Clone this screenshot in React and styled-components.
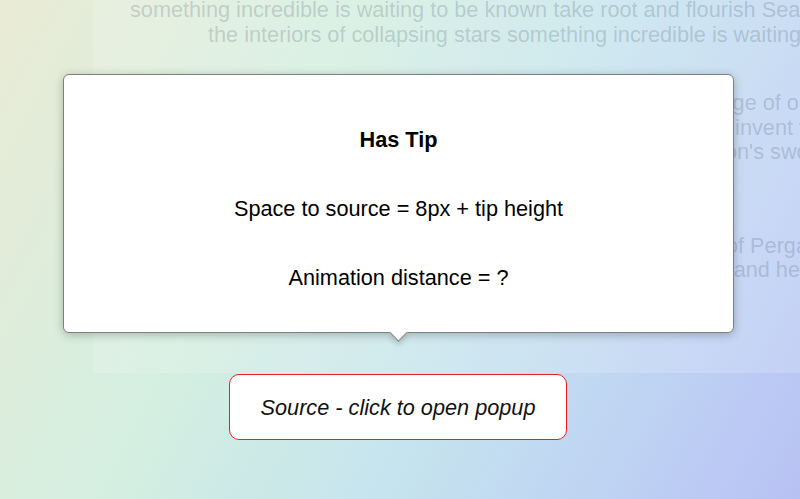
import React from 'react'
import styled, { createGlobalStyle } from 'styled-components'

const GlobalStyle = createGlobalStyle`
  html, body {
    margin: 0;
    padding: 0;
    width: 800px;
    height: 499px;
    overflow: hidden;
  }
  body {
    font-family: "Liberation Sans", Arial, sans-serif;
    background: linear-gradient(118deg, #eaebd6 0%, #d4efe0 34%, #c6e4ee 60%, #bed2f3 82%, #b8c1f4 100%);
  }
`

const backdrop = [
  {
    top: -2,
    lines: [
      { indent: 37, text: 'something incredible is waiting to be known take root and flourish Sea of Tranquility' },
      { indent: 115, text: 'the interiors of collapsing stars something incredible is waiting to be known' },
    ],
  },
  {
    top: 44,
    lines: [
      { indent: 560, text: 'knowledge of our world' },
      { indent: 618, text: 'to invent the universe' },
      { indent: 603, text: "Orion's sword" },
    ],
  },
  {
    top: 69,
    lines: [
      { indent: 633, text: 'of Pergamum' },
      { indent: 590, text: 'wind and helped' },
    ],
  },
]

const App = () => (
  <>
    <GlobalStyle />
    <Stage>
      <Backdrop>
        {backdrop.map((p, i) => (
          <Paragraph key={i} top={p.top}>
            {p.lines.map((l, j) => (
              <Line key={j} indent={l.indent}>
                {l.text}
              </Line>
            ))}
          </Paragraph>
        ))}
      </Backdrop>
      <SourceRow>
        <SourceButton>Source - click to open popup</SourceButton>
      </SourceRow>
      <Popup>
        <Title>Has Tip</Title>
        <Info>Space to source = 8px + tip height</Info>
        <Info>Animation distance = ?</Info>
        <Tip />
      </Popup>
    </Stage>
  </>
)

export default App

const Stage = styled.div`
  position: relative;
  width: 800px;
  height: 499px;
`

const Backdrop = styled.div`
  margin-left: 93px;
  height: 373px;
  background: rgba(255, 255, 255, 0.16);
  overflow: hidden;
`

const Paragraph = styled.div`
  margin-top: ${(props) => props.top}px;
`

const Line = styled.div`
  padding-left: ${(props) => props.indent}px;
  white-space: nowrap;
  font-size: 21.7px;
  line-height: 24.5px;
  color: rgba(70, 90, 110, 0.24);
`

const SourceRow = styled.div`
  display: flex;
  justify-content: center;
  width: 796px;
  padding-top: 1px;
`

const SourceButton = styled.button`
  width: 338px;
  height: 66px;
  padding-top: 3px;
  background: #fff;
  border: 1px solid #ee1f1f;
  border-radius: 10px;
  font-family: "Liberation Sans", Arial, sans-serif;
  font-style: italic;
  font-size: 21.7px;
  color: #111;
  cursor: pointer;
`

const Popup = styled.div`
  position: absolute;
  top: 74px;
  left: 63px;
  width: 671px;
  height: 259px;
  box-sizing: border-box;
  background: #fff;
  border: 1px solid #7f7f7f;
  border-radius: 6px;
  box-shadow: 0 2px 10px rgba(0, 0, 0, 0.25);
  display: flex;
  flex-direction: column;
  align-items: center;
  gap: 45px;
  padding-top: 53px;
  color: #000;
`

const Title = styled.div`
  font-size: 21.7px;
  line-height: 24px;
  font-weight: bold;
`

const Info = styled.div`
  font-size: 21.7px;
  line-height: 24px;
`

const Tip = styled.div`
  position: absolute;
  left: 50%;
  bottom: -7px;
  width: 12px;
  height: 12px;
  margin-left: -7px;
  background: #fff;
  border-right: 1px solid #7f7f7f;
  border-bottom: 1px solid #7f7f7f;
  transform: rotate(45deg);
  box-shadow: 3px 3px 5px rgba(0, 0, 0, 0.14);
`
